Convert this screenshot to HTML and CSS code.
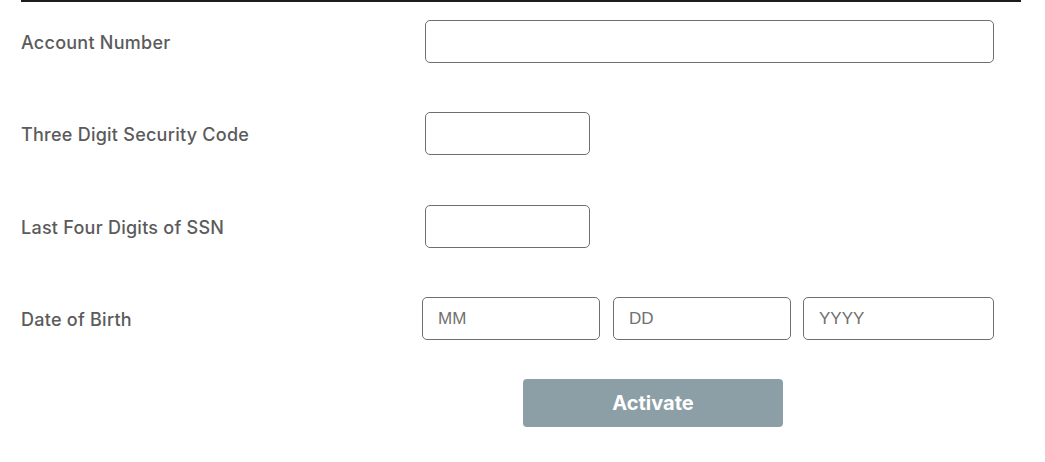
FILE: index.html
```html
<!DOCTYPE html>
<html lang="en">
<head>
    <meta charset="UTF-8">
    <meta name="viewport" content="width=device-width, initial-scale=1.0">
    <title>Activate Card</title>
    <link rel="stylesheet" href="styles.css">
</head>
<body>

    <form class="activate-form">
        <div class="form-row">
            <label for="accountNumber">Account Number</label>
            <input type="text" id="accountNumber" class="field field-wide">
        </div>

        <div class="form-row">
            <label for="securityCode">Three Digit Security Code</label>
            <input type="text" id="securityCode" class="field field-short">
        </div>

        <div class="form-row">
            <label for="ssnLast4">Last Four Digits of SSN</label>
            <input type="text" id="ssnLast4" class="field field-short">
        </div>

        <div class="form-row">
            <label for="dobMonth">Date of Birth</label>
            <div class="dob-group">
                <input type="text" id="dobMonth" class="field dob-month" placeholder="MM">
                <input type="text" id="dobDay" class="field dob-day" placeholder="DD">
                <input type="text" id="dobYear" class="field dob-year" placeholder="YYYY">
            </div>
        </div>

        <div class="form-actions">
            <button type="submit" class="btn-activate">Activate</button>
        </div>
    </form>

</body>
</html>
```

FILE: styles.css
```css
body { margin: 0; background: #fff; font-family: "Inter", "Liberation Sans", sans-serif; }
.activate-form { width: 1000px; margin-left: 21px; border-top: 2px solid #1c1c1c; padding-top: 18px; }
.form-row { display: grid; grid-template-columns: 404px 1fr; align-items: center; height: 43px; margin-bottom: 49px; }
.form-row:nth-child(2) { margin-bottom: 50px; }
.form-row:nth-child(4) { margin-bottom: 39px; }
.form-row label { font-size: 18px; font-weight: 500; color: #5b5b5b; letter-spacing: 0.25px; padding-top: 1px; }
.field { box-sizing: border-box; height: 43px; border: 1px solid #6f6f6f; border-radius: 5px; background: #fff; padding: 0 15px; font-family: "Liberation Sans", Arial, sans-serif; font-size: 17px; color: #555; outline: none; }
.field::placeholder { color: #707070; }
.field-wide { width: 569px; }
.field-short { width: 165px; }
.dob-group { display: flex; margin-left: -3px; }
.dob-month, .dob-day { width: 178px; margin-right: 13px; }
.dob-day { margin-right: 12px; }
.dob-year { width: 191px; }
.form-actions { padding-left: 502px; }
.btn-activate { width: 260px; height: 48px; border: none; border-radius: 4px; background-color: #8c9fa7; color: #fff; font-family: "Inter", "Liberation Sans", sans-serif; font-size: 20px; font-weight: 700; letter-spacing: 0; cursor: pointer; }
```
